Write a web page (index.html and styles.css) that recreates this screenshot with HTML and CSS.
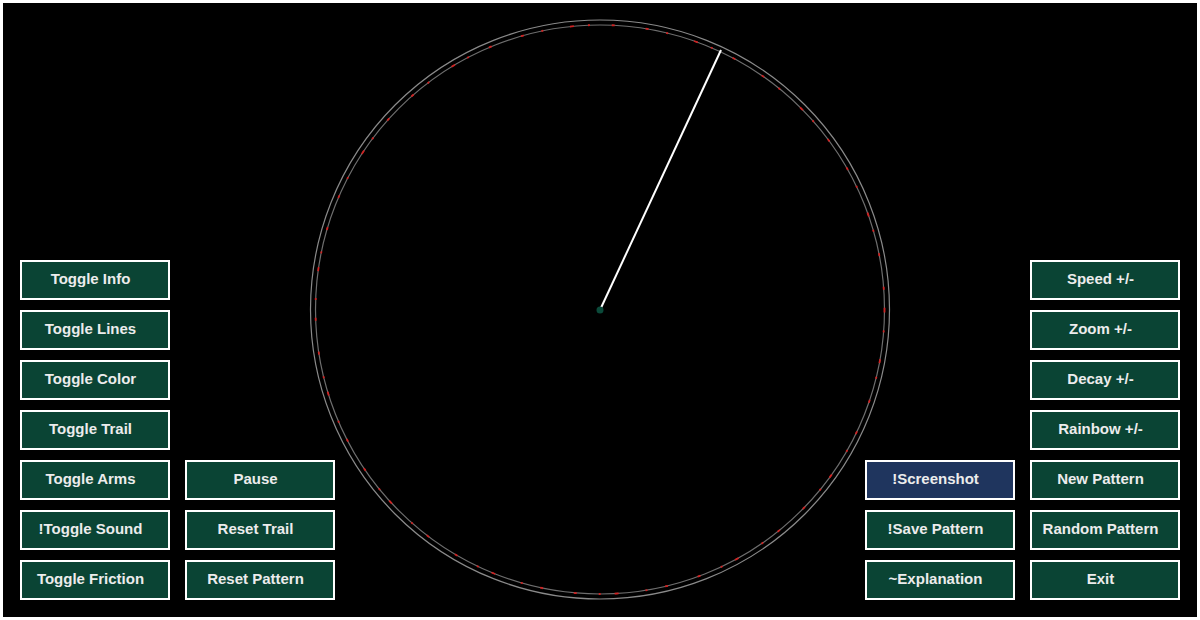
FILE: index.html
```html
<!DOCTYPE html>
<html>
<head>
<meta charset="utf-8">
<link rel="stylesheet" href="styles.css">
</head>
<body>
<main class="stage">
  <svg class="canvas" viewBox="3 3 1194 614" width="1194" height="614">
    <circle cx="600" cy="309.5" r="289.5" fill="none" stroke="#8a8a8a" stroke-width="1.2"/>
    <circle cx="600" cy="309.5" r="284.5" fill="none" stroke="#6e6e6e" stroke-width="1.2"/>
    <circle cx="600" cy="309.5" r="284.5" fill="none" stroke="#d02222" stroke-width="1.8" stroke-dasharray="3 18 2 27 4 14 2 22 3 31"/>
    <line x1="600" y1="310" x2="721" y2="50" stroke="#ffffff" stroke-width="2"/>
    <circle cx="600" cy="310" r="3.5" fill="#0b4a3a"/>
  </svg>
  <div class="group">
    <div class="col">
      <button class="btn">Toggle Info</button>
      <button class="btn">Toggle Lines</button>
      <button class="btn">Toggle Color</button>
      <button class="btn">Toggle Trail</button>
      <button class="btn">Toggle Arms</button>
      <button class="btn">!Toggle Sound</button>
      <button class="btn">Toggle Friction</button>
    </div>
    <div class="col">
      <button class="btn">Pause</button>
      <button class="btn">Reset Trail</button>
      <button class="btn">Reset Pattern</button>
    </div>
  </div>
  <div class="group">
    <div class="col">
      <button class="btn btn-active">!Screenshot</button>
      <button class="btn">!Save Pattern</button>
      <button class="btn">~Explanation</button>
    </div>
    <div class="col">
      <button class="btn">Speed +/-</button>
      <button class="btn">Zoom +/-</button>
      <button class="btn">Decay +/-</button>
      <button class="btn">Rainbow +/-</button>
      <button class="btn">New Pattern</button>
      <button class="btn">Random Pattern</button>
      <button class="btn">Exit</button>
    </div>
  </div>
</main>
</body>
</html>
```

FILE: styles.css
```css
html, body {
  margin: 0;
  padding: 0;
  background: #ffffff;
}
body {
  width: 1200px;
  height: 620px;
  padding: 3px;
  box-sizing: border-box;
}
.stage {
  position: relative;
  width: 1194px;
  height: 614px;
  background: #000000;
  box-sizing: border-box;
  padding: 17px;
  display: flex;
  justify-content: space-between;
  align-items: flex-end;
}
.canvas {
  position: absolute;
  left: 0;
  top: 0;
  display: block;
}
.group {
  position: relative;
  display: flex;
  gap: 15px;
  align-items: flex-end;
}
.col {
  display: flex;
  flex-direction: column;
  gap: 10px;
}
.btn {
  width: 150px;
  height: 40px;
  box-sizing: border-box;
  margin: 0;
  padding: 0 9px 3px 0;
  border: 2px solid #ffffff;
  border-radius: 0;
  background: #0a4434;
  color: #ececec;
  font-family: "Liberation Sans", Arial, sans-serif;
  font-weight: bold;
  font-size: 15px;
  text-align: center;
  white-space: nowrap;
}
.btn-active {
  background: #1f355e;
}
```
